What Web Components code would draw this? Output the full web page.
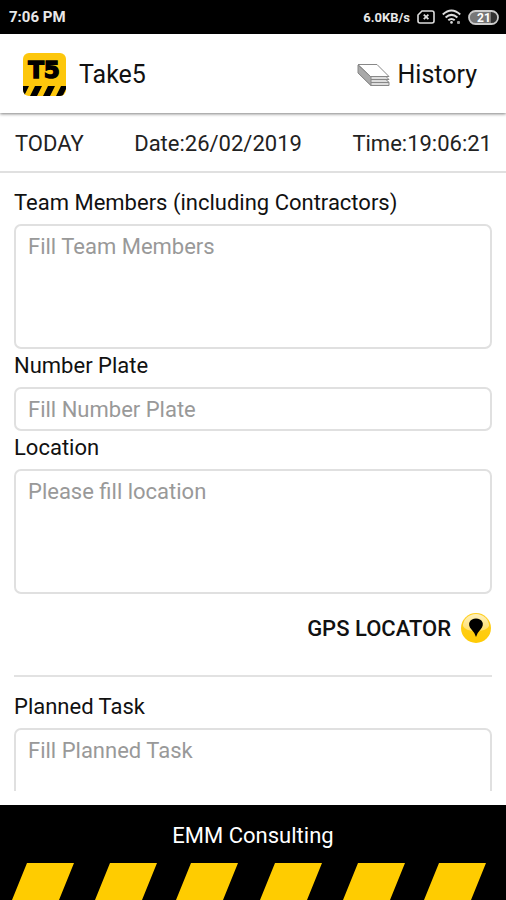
<!DOCTYPE html>
<html lang="en">
<head>
<meta charset="utf-8">
<meta name="viewport" content="width=device-width, initial-scale=1">
<title>Take5</title>
<style>
  html, body {
    margin: 0;
    height: 100%;
  }
  body {
    font-family: Roboto, "Liberation Sans", sans-serif;
    color: #111;
    background: #fff;
  }
</style>
</head>
<body>
<take-app></take-app>

<script>
function define(name, html, setup) {
  const template = document.createElement("template");
  template.innerHTML = html;
  customElements.define(name, class extends HTMLElement {
    constructor() {
      super();
      this.attachShadow({ mode: "open" }).appendChild(
        template.content.cloneNode(true)
      );
    }
    connectedCallback() {
      if (setup) setup(this, this.shadowRoot);
    }
  });
}

define("status-bar", `
  <style>
    :host {
      display: flex;
      align-items: center;
      justify-content: space-between;
      height: 34px;
      padding: 0 7px 0 9px;
      background: #000;
      color: #e8e8e8;
      font-size: 15px;
      font-weight: 700;
    }
    .right {
      display: flex;
      align-items: center;
      gap: 7px;
      font-size: 13px;
    }
    svg {
      display: block;
    }
  </style>
  <span><slot name="time"></slot></span>
  <div class="right">
    <span><slot name="speed"></slot></span>
    <svg width="18" height="14" viewBox="0 0 18 14" fill="none" stroke="#ddd">
      <path d="M5 1H15Q17 1 17 3V11Q17 13 15 13H3Q1 13 1 11V5Z" stroke-width="1.6"/>
      <path d="M6.8 4.6L11.4 9.2M11.4 4.6L6.8 9.2" stroke-width="1.8"/>
    </svg>
    <svg width="19" height="16" viewBox="0 0 19 16" fill="none" stroke="#ddd" stroke-width="2">
      <path d="M.8 5.6Q9.500 -2.600 18.200 5.600M3.600 8.500Q9.500 3.200 15.400 8.500M6.300 11.300Q9.500 8.600 12.700 11.300"/>
      <circle cx="9.500" cy="13.400" r="1.300" fill="#ddd" stroke="none"/>
      <path d="M15 13.500H18M16.500 12V15" stroke="#999"/>
    </svg>
    <svg width="31" height="15" viewBox="0 0 31 15">
      <path d="M7 1H23V14H7A6 6.500 0 0 1 7 1Z" fill="#777"/>
      <path d="M23 2H25Q29 3 29 7.500T25 13H23Z" fill="#333"/>
      <rect x="1" y="1" width="29" height="13" rx="6.500" fill="none" stroke="#ccc" stroke-width="1.800"/>
      <text x="16" y="12" text-anchor="middle" font-size="12" font-weight="700" fill="#fff">21</text>
    </svg>
  </div>
`);

define("app-header", `
  <style>
    :host {
      display: flex;
      align-items: center;
      justify-content: space-between;
      box-sizing: border-box;
      height: 79px;
      padding: 2px 29px 0 23px;
      font-size: 25px;
      position: relative;
      box-shadow: 0 1px 3px rgba(0, 0, 0, .5);
    }
    .brand, a {
      display: flex;
      align-items: center;
    }
    .brand { gap: 13px; }
    h1 {
      margin: 0;
      font-size: inherit;
      font-weight: 400;
    }
    a {
      gap: 7px;
      color: inherit;
      text-decoration: none;
    }
    svg { display: block; }
  </style>
  <div class="brand">
    <svg width="43" height="43" viewBox="0 0 43 43">
      <defs><clipPath id="tile"><rect width="43" height="43" rx="6"/></clipPath></defs>
      <g clip-path="url(#tile)">
        <rect width="43" height="43" fill="#fdc70c"/>
        <path d="M0 33H6L1 43H0ZM12 33H19L14 43H7ZM25 33H32L27 43H20ZM38 33H43V36L39.500 43H33Z"/>
      </g>
      <text x="21" y="25" text-anchor="middle" font-family="DejaVu Sans" font-size="23" font-weight="700" stroke="#000" stroke-width="1.500">T5</text>
    </svg>
    <h1><slot></slot></h1>
  </div>
  <a href="#history">
    <svg width="33" height="24" viewBox="0 0 33 24" stroke="#777" stroke-linejoin="round">
      <g fill="#ddd" stroke="#888">
        <path d="M1 10L14 22.500H32V19.500L20 10Z"/>
        <path d="M1 7.500L14 19.500H32L20 7.500Z"/>
        <path d="M1 4.500L14 16.500H32L20 4.500Z"/>
        <path d="M1 1.500L13.500 13.500H32L20 1.500Z" fill="#fff"/>
      </g>
      <path d="M1 2V10L14 22.500V14Z" fill="#aaa" stroke="#888"/>
    </svg>
    <span><slot name="link"></slot></span>
  </a>
`);

define("date-row", `
  <style>
    :host {
      display: flex;
      align-items: center;
      justify-content: space-between;
      box-sizing: border-box;
      height: 60px;
      padding: 2px 14px 0 15px;
      border-bottom: 2px solid #e0e0e0;
      font-size: 22px;
      color: #222;
    }
  </style>
  <slot></slot>
`);

define("form-field", `
  <style>
    :host {
      display: block;
      font-size: 22px;
    }
    label {
      display: block;
      padding-bottom: 4px;
      line-height: 34px;
    }
    input, textarea {
      display: block;
      box-sizing: border-box;
      width: 100%;
      margin: 0;
      padding: 7px 12px;
      border: 2px solid #e0e0e0;
      border-radius: 7px;
      background: #fff;
      color: inherit;
      font: inherit;
      line-height: 28px;
      resize: none;
    }
    input { height: 44px; }
    textarea { height: 125px; }
    ::placeholder {
      color: #999;
      opacity: 1;
    }
  </style>
  <label for="field"></label>
`, (host, root) => {
  if (root.querySelector("#field")) return;
  const field = document.createElement(host.hasAttribute("multiline") ? "textarea" : "input");
  field.id = "field";
  field.placeholder = host.getAttribute("placeholder");
  root.querySelector("label").textContent = host.getAttribute("label");
  root.appendChild(field);
});

define("gps-button", `
  <style>
    :host {
      display: flex;
      justify-content: flex-end;
      padding: 14px 0 27px;
      border-bottom: 2px solid #e2e2e2;
      margin-bottom: 13px;
    }
    button {
      display: flex;
      align-items: center;
      gap: 9px;
      height: 40px;
      padding: 0;
      border: 0;
      background: none;
      color: #111;
      font: 500 22px Roboto, "Liberation Sans", sans-serif;
    }
    svg { display: block; }
  </style>
  <button type="button">
    <slot></slot>
    <svg width="32" height="32" viewBox="0 0 32 32">
      <defs>
        <linearGradient id="gold" x2="0" y2="1">
          <stop offset="0" stop-color="#ffcf22"/>
          <stop offset="1" stop-color="#ffcb05"/>
        </linearGradient>
        <linearGradient id="shine" x2="0" y2="1">
          <stop offset="0" stop-color="#fff" stop-opacity=".7"/>
          <stop offset="1" stop-color="#fff" stop-opacity=".35"/>
        </linearGradient>
      </defs>
      <circle cx="16" cy="16" r="15" fill="url(#gold)"/>
      <path d="M3 14A13 12 0 0 1 29 14Q27 19 16 19T3 14Z" fill="url(#shine)"/>
      <path d="M16 25Q15 21 11.500 17.500C6.500 12 10 6.500 16 6.500S25.500 12 20.500 17.500Q17 21 16 25Z"/>
    </svg>
  </button>
`);

define("app-footer", `
  <style>
    :host {
      display: block;
      background: #000;
      color: #fff;
      font-size: 22px;
      text-align: center;
    }
    p {
      margin: 0;
      padding: 14px 0 10px;
      line-height: 34px;
    }
    svg {
      display: block;
      width: 100%;
      height: 37px;
    }
  </style>
  <p><slot></slot></p>
  <svg viewBox="0 0 506 37" preserveAspectRatio="none" fill="#fc0">
    <path d="M27 0H74L59 37H12ZM110 0H157L142 37H95ZM191 0H238L223 37H176ZM275 0H322L307 37H260ZM358 0H405L390 37H343ZM439 0H486L471 37H424Z"/>
  </svg>
`);

define("take-app", `
  <style>
    :host {
      display: flex;
      flex-direction: column;
      height: 100vh;
    }
    status-bar, app-header, date-row, app-footer {
      flex: none;
    }
    main {
      flex: 1;
      min-height: 0;
      overflow-y: auto;
      scrollbar-width: none;
      padding: 13px 14px 0;
      margin-bottom: 14px;
    }
  </style>
  <status-bar>
    <span slot="time">7:06 PM</span>
    <span slot="speed">6.0KB/s</span>
  </status-bar>
  <app-header>Take5<span slot="link">History</span></app-header>
  <date-row>
    <span>TODAY</span>
    <span>Date:26/02/2019</span>
    <span>Time:19:06:21</span>
  </date-row>
  <main>
    <form-field multiline label="Team Members (including Contractors)" placeholder="Fill Team Members"></form-field>
    <form-field label="Number Plate" placeholder="Fill Number Plate"></form-field>
    <form-field multiline label="Location" placeholder="Please fill location"></form-field>
    <gps-button>GPS LOCATOR</gps-button>
    <form-field multiline label="Planned Task" placeholder="Fill Planned Task"></form-field>
  </main>
  <app-footer>EMM Consulting</app-footer>
`);
</script>
</body>
</html>
